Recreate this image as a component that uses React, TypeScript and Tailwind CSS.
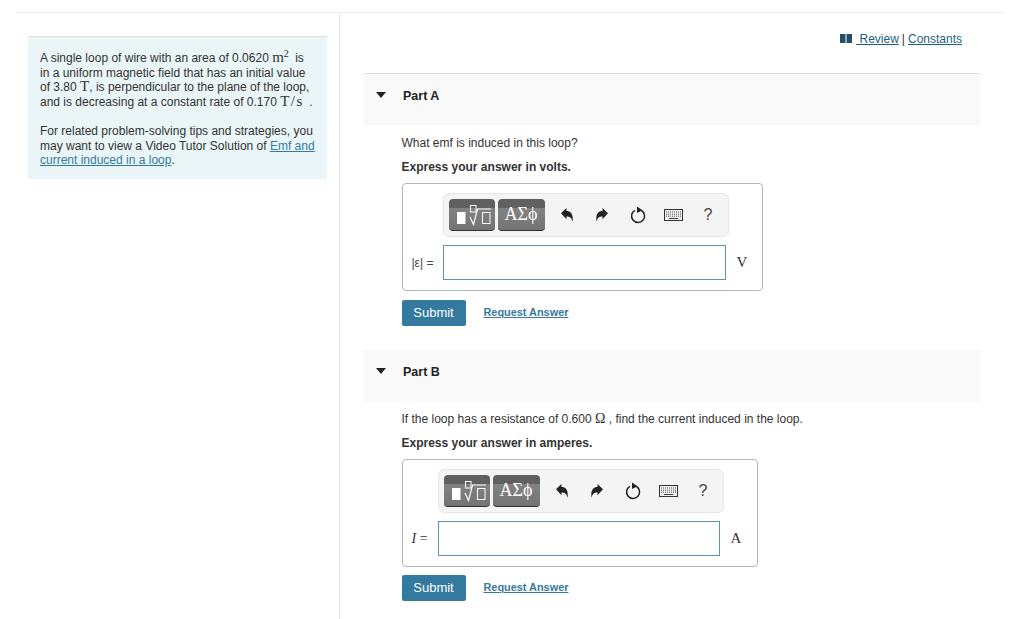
import { ReactNode } from "react";

const serif = "font-['Liberation_Serif',serif]";
const toolButton =
	"flex h-8 items-center justify-center rounded-[4px] border-b border-[#333] bg-[linear-gradient(#606060_0,#606060_28%,#828282_29%,#747474_100%)]";

const TemplatesIcon = () => (
	<svg width="46" height="32" viewBox="0 0 46 32">
		<rect x="8" y="13" width="8.500" height="12" fill="#fff" />
		<rect x="21.500" y="6.500" width="5.500" height="6.500" fill="none" stroke="#fff" strokeWidth="1" />
		<path d="M21 18l3.500 7.500L28.500 10H42" fill="none" stroke="#fff" strokeWidth="1.200" />
		<rect x="33.500" y="13.500" width="7.500" height="11" fill="none" stroke="#fff" strokeWidth="1" />
	</svg>
);

const UndoIcon = ({ flip }: { flip?: boolean }) => (
	<svg width="12" height="14" viewBox="0 0 12 14" className={flip ? "-scale-x-100" : ""}>
		<path d="M0 5.200L5.500 0v3C10 3 12.500 6.500 11.500 13.800 10.500 9.800 9 8.500 5.500 8.500v2.800z" fill="#222" />
	</svg>
);

const ResetIcon = () => (
	<svg width="17" height="18" viewBox="0 0 17 18">
		<path d="M11.500 4.500a6.500 6.500 0 1 1-6.500-.2" fill="none" stroke="#222" strokeWidth="1.500" />
		<path d="M7 0.500l5.500 3.800L7 7z" fill="#222" />
	</svg>
);

const KeyboardIcon = () => (
	<svg width="19" height="12" viewBox="0 0 19 12">
		<rect x="0.500" y="0.500" width="18" height="11" fill="#eee" stroke="#333" strokeWidth="1" />
		<path d="M2 3h15M2 5.200h15M2 7.200h15" stroke="#555" strokeWidth="1" strokeDasharray="1 1" />
		<path d="M5 9.500h9" stroke="#444" strokeWidth="1" />
	</svg>
);

const Toolbar = () => (
	<div className="flex h-11 w-[286px] items-center rounded-md border border-[#e6e6e6] bg-[#f4f4f4] pl-[5px]">
		<div className={`w-[46px] ${toolButton}`}>
			<TemplatesIcon />
		</div>
		<div className={`ml-[3px] w-[47px] text-[18px] text-white ${toolButton} ${serif}`}>ΑΣϕ</div>
		<div className="ml-4 flex w-3 justify-center">
			<UndoIcon />
		</div>
		<div className="ml-[23px] flex w-3 justify-center">
			<UndoIcon flip />
		</div>
		<div className="ml-[22px] flex w-[17px] justify-center">
			<ResetIcon />
		</div>
		<div className="ml-[17px] flex w-[19px] justify-center">
			<KeyboardIcon />
		</div>
		<div className="ml-[21px] text-[16px] text-[#444]">?</div>
	</div>
);

type PartProps = {
	title: string;
	question: ReactNode;
	instruction: string;
	label: ReactNode;
	unit: string;
	boxWidth: string;
	inputWidth: string;
	toolbarInset: string;
	labelWidth: string;
	submitGap: string;
};

const Part = ({ title, question, instruction, label, unit, boxWidth, inputWidth, toolbarInset, labelWidth, submitGap }: PartProps) => (
	<section>
		<div className="flex h-[51px] items-start bg-[#f9f9f9] pl-3 pt-[14px]">
			<div className="mt-[4px] h-0 w-0 border-x-[5px] border-t-[6px] border-x-transparent border-t-[#222]" />
			<h3 className="ml-[17px] text-[12.5px] font-bold leading-4 text-[#222]">{title}</h3>
		</div>
		<div className="pl-[37.5px]">
			<p className="mt-[10px] text-[12px] leading-4 text-[#333]">{question}</p>
			<p className="mt-2 text-[12px] font-bold leading-4 text-[#333]">{instruction}</p>
			<div className={`mt-[8px] h-[108px] rounded-[4px] border border-[#b5b5b5] pt-[9px] ${boxWidth}`}>
				<div className={toolbarInset}>
					<Toolbar />
				</div>
				<div className="mt-2 flex items-center">
					<div className={`flex shrink-0 justify-start pl-[9px] ${labelWidth}`}>{label}</div>
					<div className={`h-[35px] border border-[#5e93ad] bg-white ${inputWidth}`} />
					<span className={`ml-[11px] text-[15px] text-[#333] ${serif}`}>{unit}</span>
				</div>
			</div>
			<div className={`flex items-center ${submitGap}`}>
				<button className="h-[26px] w-16 rounded-[2px] bg-[#337a9e] text-[13px] text-white">Submit</button>
				<a className="mb-[2px] ml-[18px] text-[10.9px] font-bold text-[#337a9e] underline">Request Answer</a>
			</div>
		</div>
	</section>
);

const App = () => {
	return (
		<div className="h-[619px] overflow-hidden bg-white pt-3 font-['Liberation_Sans',Arial,sans-serif]">
			<div className="ml-4 flex h-[607px] w-[988px] border-t border-[#ececec]">
				<aside className="w-[324px] shrink-0 border-r border-[#e6e6e6] pl-3 pt-[23px]">
					<div className="h-[143px] w-[299px] border-t border-[#dedede] bg-[#e9f5f7] px-3 pt-[14px] text-[12px] leading-[14.7px] text-[#333]">
						<p>
							A single loop of wire with an area of 0.0620{" "}
							<span className={`mr-[3px] text-[15px] leading-[0] ${serif}`}>
								m<sup className="text-[10px]">2</sup>
							</span>{" "}
							is
							<br />
							in a uniform magnetic field that has an initial value of 3.80{" "}
							<span className={`text-[15px] leading-[0] ${serif}`}>T</span>, is perpendicular to the plane of the
							loop, and is decreasing at a constant rate of 0.170{" "}
							<span className={`mr-[2px] text-[15px] leading-[0] tracking-[1.5px] ${serif}`}>T/s</span> .
						</p>
						<p className="mt-[14px]">
							For related problem-solving tips and strategies, you may want to view a Video Tutor Solution of{" "}
							<a className="text-[#337a9e] underline">Emf and current induced in a loop</a>.
						</p>
					</div>
				</aside>
				<main className="w-[640px] pl-6">
					<div className="flex h-[60px] items-start justify-end pr-[18px] pt-[18px] text-[12px] leading-4 text-[#1f5f7c]">
						<svg width="12" height="9" viewBox="0 0 12 9" className="mr-[4px] mt-[3px]">
							<path d="M0 0h5.500v9H0zM6.500 0H12v9H6.500z" fill="#22506b" />
						</svg>
						<a className="underline">&nbsp;Review</a>
						<span className="mx-[3px] text-[#333]">|</span>
						<a className="underline">Constants</a>
					</div>
					<div className="border-t border-[#e2e2e2]">
						<Part
							title="Part A"
							question="What emf is induced in this loop?"
							instruction="Express your answer in volts."
							label={<span className="text-[12px] text-[#444]">|ε| =</span>}
							unit="V"
							boxWidth="w-[361px]"
							inputWidth="w-[283px]"
							toolbarInset="pl-[40px]"
							labelWidth="w-[40px]"
							submitGap="mt-[9px]"
						/>
					</div>
					<div className="mt-6">
						<Part
							title="Part B"
							question={
								<>
									If the loop has a resistance of 0.600 <span className={`text-[14px] leading-[0] ${serif}`}>Ω</span> , find
									the current induced in the loop.
								</>
							}
							instruction="Express your answer in amperes."
							label={
								<span className={`text-[14px] text-[#333] ${serif}`}>
									<i>I</i> =
								</span>
							}
							unit="A"
							boxWidth="w-[356px]"
							inputWidth="w-[282px]"
							toolbarInset="pl-[35px]"
							labelWidth="w-[35px]"
							submitGap="mt-[8px]"
						/>
					</div>
				</main>
			</div>
		</div>
	);
};

export default App;
